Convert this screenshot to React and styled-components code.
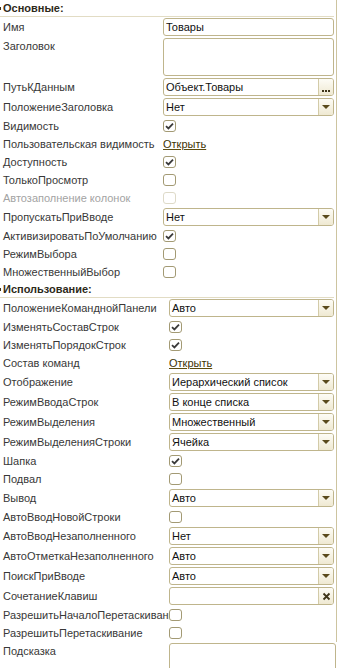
import React from 'react';
import styled, { createGlobalStyle } from 'styled-components';

const GlobalStyle = createGlobalStyle`
  html, body {
    margin: 0;
    padding: 0;
    background: #ffffff;
  }
  body {
    font-family: "Liberation Sans", Arial, sans-serif;
    font-size: 11px;
    color: #383838;
  }
`;

const Page = styled.div`
  width: 338px;
  height: 668px;
  overflow: hidden;
  background: #fff;
`;

const Panel = styled.div`
  width: 336px;
  border-right: 1px solid #cdc4a0;
  display: flex;
  flex-direction: column;
`;

const GroupHeader = styled.div`
  height: 17px;
  display: flex;
  align-items: center;
  gap: 2px;
  margin-right: 2px;
  border-bottom: 1px solid #e2dcc4;
  box-sizing: border-box;
  font-weight: bold;
  font-size: 11px;
  color: #2e2a1a;
`;

const Tick = styled.span`
  width: 1px;
  height: 3px;
  background: #3a3420;
`;

const Row = styled.div`
  display: grid;
  grid-template-columns: ${p => p.$labelWidth}px 1fr;
  height: ${p => p.$h}px;
  align-items: ${p => (p.$top ? 'start' : 'center')};
  padding-right: 2px;
`;

const Label = styled.div`
  padding-left: 3px;
  padding-top: ${p => (p.$top ? '3px' : '0')};
  white-space: nowrap;
  overflow: hidden;
  color: ${p => (p.$disabled ? '#a3a3a3' : '#383838')};
  line-height: 13px;
`;

const Field = styled.div`
  height: ${p => p.$h || 18}px;
  margin-top: ${p => (p.$top ? '1px' : '0')};
  box-sizing: border-box;
  border: 1px solid #bfb58c;
  border-radius: 3px;
  background: #fff;
  display: flex;
  align-items: ${p => (p.$top ? 'flex-start' : 'stretch')};
  overflow: hidden;
`;

const FieldText = styled.div`
  flex: 1;
  padding-left: 2px;
  color: #111;
  line-height: 16px;
  white-space: nowrap;
  overflow: hidden;
`;

const FieldButton = styled.div`
  width: 15px;
  border-left: 1px solid #d3cba8;
  background: linear-gradient(#fdfcf6, #efe9d2);
  display: flex;
  align-items: ${p => (p.$bottom ? 'flex-end' : 'center')};
  justify-content: center;
  padding-bottom: ${p => (p.$bottom ? '3px' : '0')};
  box-sizing: border-box;
  gap: 1px;
`;

const Arrow = styled.span`
  width: 0;
  height: 0;
  border-left: 4px solid transparent;
  border-right: 4px solid transparent;
  border-top: 4px solid #5a4a1c;
`;

const Dot = styled.span`
  width: 2px;
  height: 2px;
  background: #3e3418;
`;

const Check = styled.div`
  width: 13px;
  height: 12px;
  box-sizing: border-box;
  border: 1px solid ${p => (p.$disabled ? '#dedac8' : '#a39a74')};
  border-radius: 3px;
  background: #fff;
  display: flex;
  align-items: center;
  justify-content: center;
`;

const Link = styled.span`
  color: #3d3306;
  text-decoration: underline;
  text-decoration-color: #5c4c10;
  text-underline-offset: 1px;
  justify-self: start;
`;

const CheckMark = () => (
  <svg width="9" height="8" viewBox="0 0 9 8">
    <path d="M1 4.2 L3.4 6.4 L8 1.6" fill="none" stroke="#3a3a3a" strokeWidth="1.8" />
  </svg>
);

const ClearIcon = () => (
  <svg width="9" height="9" viewBox="0 0 9 9">
    <path d="M1.5 1.5 L7.5 7.5 M7.5 1.5 L1.5 7.5" stroke="#3e3418" strokeWidth="1.8" />
  </svg>
);

function Control({ item }) {
  switch (item.type) {
    case 'input':
      return (
        <Field>
          <FieldText>{item.value}</FieldText>
          {item.button === 'dots' && (
            <FieldButton $bottom>
              <Dot />
              <Dot />
              <Dot />
            </FieldButton>
          )}
          {item.button === 'clear' && <FieldButton><ClearIcon /></FieldButton>}
        </Field>
      );
    case 'text':
      return <Field $h={item.fieldH} $top />;
    case 'select':
      return (
        <Field>
          <FieldText>{item.value}</FieldText>
          <FieldButton><Arrow /></FieldButton>
        </Field>
      );
    case 'check':
      return <Check $disabled={item.disabled}>{item.checked && <CheckMark />}</Check>;
    case 'link':
      return <Link>{item.value}</Link>;
    default:
      return null;
  }
}

const rowHeight = item => {
  if (item.type === 'text') return item.h;
  if (item.type === 'input' || item.type === 'select') return 20;
  return 18;
};

const groups = [
  {
    title: 'Основные:',
    labelWidth: 163,
    items: [
      { label: 'Имя', type: 'input', value: 'Товары' },
      { label: 'Заголовок', type: 'text', h: 40, fieldH: 38 },
      { label: 'ПутьКДанным', type: 'input', value: 'Объект.Товары', button: 'dots' },
      { label: 'ПоложениеЗаголовка', type: 'select', value: 'Нет' },
      { label: 'Видимость', type: 'check', checked: true },
      { label: 'Пользовательская видимость', type: 'link', value: 'Открыть' },
      { label: 'Доступность', type: 'check', checked: true },
      { label: 'ТолькоПросмотр', type: 'check' },
      { label: 'Автозаполнение колонок', type: 'check', disabled: true },
      { label: 'ПропускатьПриВводе', type: 'select', value: 'Нет' },
      { label: 'АктивизироватьПоУмолчанию', type: 'check', checked: true },
      { label: 'РежимВыбора', type: 'check' },
      { label: 'МножественныйВыбор', type: 'check' },
    ],
  },
  {
    title: 'Использование:',
    labelWidth: 169,
    items: [
      { label: 'ПоложениеКоманднойПанели', type: 'select', value: 'Авто' },
      { label: 'ИзменятьСоставСтрок', type: 'check', checked: true },
      { label: 'ИзменятьПорядокСтрок', type: 'check', checked: true },
      { label: 'Состав команд', type: 'link', value: 'Открыть' },
      { label: 'Отображение', type: 'select', value: 'Иерархический список' },
      { label: 'РежимВводаСтрок', type: 'select', value: 'В конце списка' },
      { label: 'РежимВыделения', type: 'select', value: 'Множественный' },
      { label: 'РежимВыделенияСтроки', type: 'select', value: 'Ячейка' },
      { label: 'Шапка', type: 'check', checked: true },
      { label: 'Подвал', type: 'check' },
      { label: 'Вывод', type: 'select', value: 'Авто' },
      { label: 'АвтоВводНовойСтроки', type: 'check' },
      { label: 'АвтоВводНезаполненного', type: 'select', value: 'Нет' },
      { label: 'АвтоОтметкаНезаполненного', type: 'select', value: 'Авто' },
      { label: 'ПоискПриВводе', type: 'select', value: 'Авто' },
      { label: 'СочетаниеКлавиш', type: 'input', value: '', button: 'clear' },
      { label: 'РазрешитьНачалоПеретаскивания', type: 'check' },
      { label: 'РазрешитьПеретаскивание', type: 'check' },
    ],
  },
];

const hint = { label: 'Подсказка', type: 'text', h: 40, fieldH: 38 };

function PropRow({ item, labelWidth }) {
  const top = item.type === 'text';
  return (
    <Row $labelWidth={labelWidth} $h={rowHeight(item)} $top={top}>
      <Label $top={top} $disabled={item.disabled}>{item.label}</Label>
      <Control item={item} />
    </Row>
  );
}

export default function App() {
  return (
    <Page>
      <GlobalStyle />
      <Panel>
        {groups.map(group => (
          <React.Fragment key={group.title}>
            <GroupHeader>
              <Tick />
              {group.title}
            </GroupHeader>
            {group.items.map(item => (
              <PropRow key={item.label} item={item} labelWidth={group.labelWidth} />
            ))}
          </React.Fragment>
        ))}
      </Panel>
      <PropRow item={hint} labelWidth={169} />
    </Page>
  );
}
